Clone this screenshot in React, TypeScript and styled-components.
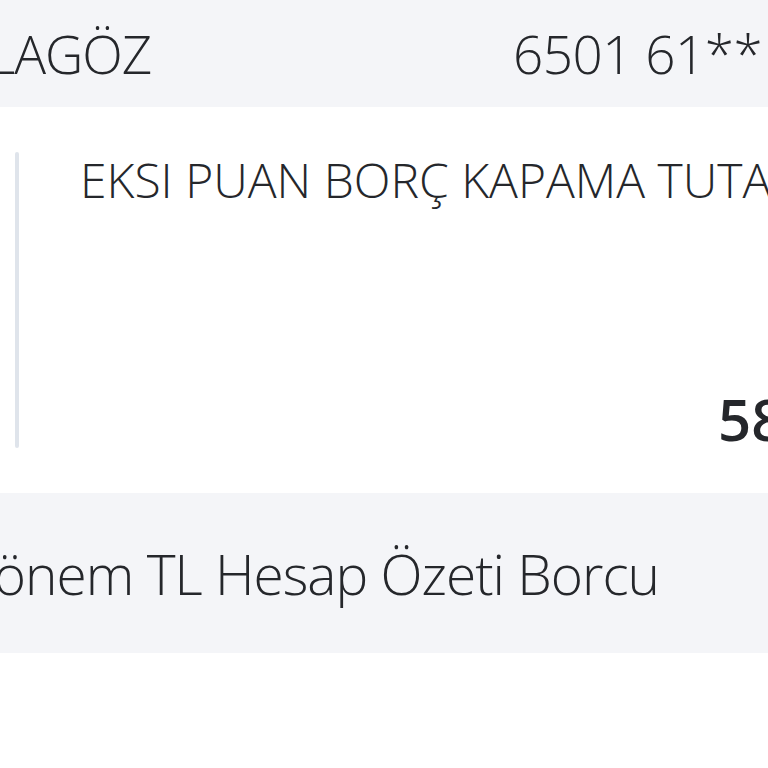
import React from "react";
import styled, { createGlobalStyle } from "styled-components";

const GlobalStyle = createGlobalStyle`
  html, body {
    margin: 0;
    padding: 0;
    background: #ffffff;
    overflow: hidden;
  }
  body {
    font-family: "Open Sans", "DejaVu Sans", sans-serif;
    color: #25272b;
  }
`;

const Page = styled.div`
  width: 768px;
  height: 768px;
  overflow: hidden;
  background: #ffffff;
  display: flex;
  flex-direction: column;
`;

const Band = styled.div<{ $height: number }>`
  height: ${(p) => p.$height}px;
  background: #f4f5f8;
  display: flex;
  align-items: center;
  white-space: nowrap;
  overflow: hidden;
  flex-shrink: 0;
`;

const BandText = styled.span<{ $size: number; $shift?: number }>`
  font-size: ${(p) => p.$size}px;
  font-weight: 300;
  letter-spacing: -1px;
  margin-left: ${(p) => p.$shift || 0}px;
  flex: 1;
`;

const CardSlot = styled.span`
  flex: 0 0 255px;
  font-size: 53px;
  font-weight: 300;
  letter-spacing: -0.5px;
  overflow: hidden;
`;

const Detail = styled.div`
  height: 386px;
  display: flex;
  align-items: center;
  padding-left: 15px;
  flex-shrink: 0;
`;

const Rule = styled.div`
  width: 4px;
  height: 296px;
  background: #dfe4eb;
  border-radius: 2px;
  flex-shrink: 0;
`;

const Body = styled.div`
  height: 296px;
  margin-left: 61px;
  display: flex;
  flex-direction: column;
  justify-content: space-between;
  white-space: nowrap;
`;

const Title = styled.div`
  font-size: 48px;
  font-weight: 300;
  line-height: 1;
  margin-top: 4px;
`;

const Amount = styled.div`
  font-size: 58px;
  font-weight: 600;
  line-height: 1;
  margin-left: 638px;
`;

export default function App() {
  return (
    <Page>
      <GlobalStyle />
      <Band $height={107}>
        <BandText $size={53} $shift={-12}>LAGÖZ</BandText>
        <CardSlot>6501 61** ****</CardSlot>
      </Band>
      <Detail>
        <Rule />
        <Body>
          <Title>EKSI PUAN BORÇ KAPAMA TUTARI</Title>
          <Amount>58,00 TL</Amount>
        </Body>
      </Detail>
      <Band $height={160}>
        <BandText $size={55} $shift={-44}>Dönem TL Hesap Özeti Borcu</BandText>
      </Band>
    </Page>
  );
}
